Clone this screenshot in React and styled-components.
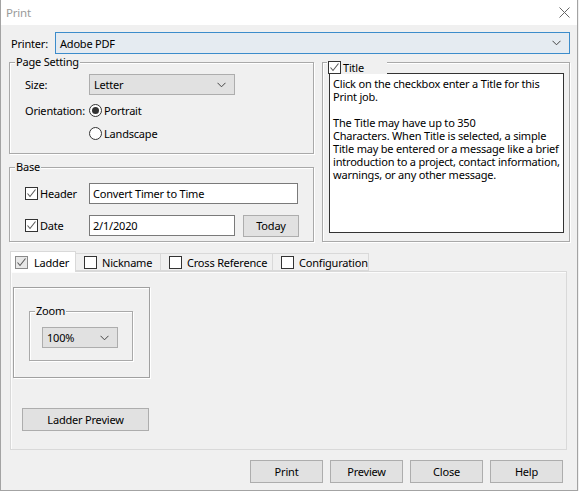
import * as React from 'react'
import styled, {createGlobalStyle} from 'styled-components'

const GlobalStyle = createGlobalStyle`
  html, body {
    margin: 0;
    padding: 0;
    background: #f0f0f0;
  }
  body {
    font-family: "Noto Sans", "Liberation Sans", sans-serif;
    font-size: 11px;
    letter-spacing: -0.2px;
    color: #000;
  }
  * { box-sizing: border-box; }
`

function Check({checked = true, dim}) {
  return (
    <StyledCheck dim={dim ? 1 : 0}>
      {checked && (
        <svg width="11" height="11" viewBox="0 0 11 11">
          <polyline points="1.5,5.5 4,8.5 9.5,1.5" fill="none" stroke="#5a5a5a" strokeWidth="1.1" />
        </svg>
      )}
    </StyledCheck>
  )
}

function Radio({checked}) {
  return <StyledRadio>{checked && <span />}</StyledRadio>
}

function Chevron() {
  return (
    <svg width="9" height="6" viewBox="0 0 9 6">
      <polyline points="0.5,0.8 4.5,4.8 8.5,0.8" fill="none" stroke="#444" strokeWidth="1" />
    </svg>
  )
}

function Select({value, width, height = 21, variant}) {
  return (
    <StyledSelect style={{width}} h={height} variant={variant}>
      <span>{value}</span>
      <Chevron />
    </StyledSelect>
  )
}

const TITLE_TEXT = [
  'Click on the checkbox enter a Title for this',
  'Print job.',
  '',
  'The Title may have up to 350',
  'Characters. When Title is selected, a simple',
  'Title may be entered or a message like a brief',
  'introduction to a project, contact information,',
  'warnings, or any other message.'
].join('\n')

const tabs = [
  {name: 'Ladder', width: 66, checked: true, active: true},
  {name: 'Nickname', width: 85},
  {name: 'Cross Reference', width: 112},
  {name: 'Configuration', width: 96}
]

export default function App() {
  return (
    <>
      <GlobalStyle />
      <Window>
        <TitleBar>
          <span className="caption">Print</span>
          <svg width="11" height="11" viewBox="0 0 11 11">
            <path d="M0.5 0.5 L10.5 10.5 M10.5 0.5 L0.5 10.5" stroke="#666" strokeWidth="1" />
          </svg>
        </TitleBar>

        <Body>
          <PrinterRow>
            <label>Printer:</label>
            <Select value="Adobe PDF" height={22} variant="focus" />
          </PrinterRow>

          <Columns>
            <LeftColumn>
              <GroupBox h={92}>
                <Legend>Page Setting</Legend>
                <PageGrid>
                  <FieldLabel>Size:</FieldLabel>
                  <Select value="Letter" width={146} />
                  <FieldLabel>Orientation:</FieldLabel>
                  <RadioRow><Radio checked />Portrait</RadioRow>
                  <span />
                  <RadioRow><Radio />Landscape</RadioRow>
                </PageGrid>
              </GroupBox>

              <GroupBox h={75}>
                <Legend>Base</Legend>
                <BaseRows>
                  <BaseRow>
                    <CheckLabel><Check />Header</CheckLabel>
                    <TextInput w={209}>Convert Timer to Time</TextInput>
                  </BaseRow>
                  <BaseRow>
                    <CheckLabel><Check />Date</CheckLabel>
                    <TextInput w={146}>2/1/2020</TextInput>
                    <Button w={56} h={22}>Today</Button>
                  </BaseRow>
                </BaseRows>
              </GroupBox>
            </LeftColumn>

            <GroupBox>
              <Legend className="with-check"><Check />Title</Legend>
              <TitleArea>{TITLE_TEXT}</TitleArea>
            </GroupBox>
          </Columns>

          <TabStrip>
            {tabs.map(tab => (
              <Tab key={tab.name} w={tab.width} active={tab.active ? 1 : 0}>
                <Check checked={!!tab.checked} dim={tab.active} />
                <span>{tab.name}</span>
              </Tab>
            ))}
          </TabStrip>
          <TabPanel>
            <PlainGroup>
              <GroupBox className="zoom">
                <Legend>Zoom</Legend>
                <Select value="100%" width={76} />
              </GroupBox>
            </PlainGroup>
            <Button w={127} h={23} className="preview">Ladder Preview</Button>
          </TabPanel>

          <ButtonBar>
            <Button w={73} h={23}>Print</Button>
            <Button w={73} h={23}>Preview</Button>
            <Button w={73} h={23}>Close</Button>
            <Button w={73} h={23}>Help</Button>
          </ButtonBar>
        </Body>
      </Window>
    </>
  )
}

const Window = styled.div`
  width: 578px;
  height: 491px;
  border: 1px solid #a3a3a3;
  border-top: none;
  background: #f0f0f0;
  display: flex;
  flex-direction: column;
`

const TitleBar = styled.div`
  height: 25px;
  background: #fff;
  display: flex;
  align-items: center;
  justify-content: space-between;
  padding: 0 7px 0 5px;

  .caption {
    color: #9a9a9a;
    font-size: 11.5px;
  }
`

const Body = styled.div`
  flex: 1;
  padding: 7px 7px 0 8px;
  display: flex;
  flex-direction: column;
`

const PrinterRow = styled.div`
  display: flex;
  align-items: center;
  height: 22px;

  label {
    width: 46px;
    padding-left: 2px;
  }
  & > div {
    flex: 1;
  }
`

const StyledSelect = styled.div`
  height: ${p => p.h}px;
  display: flex;
  align-items: center;
  justify-content: space-between;
  padding: 0 8px 0 4px;
  background: ${p => p.variant === 'focus' ? '#e5ebf1' : '#e1e1e1'};
  border: 1px solid ${p => p.variant === 'focus' ? '#3c8ccb' : '#adadad'};
  white-space: nowrap;
`

const Columns = styled.div`
  margin-top: 8px;
  display: grid;
  grid-template-columns: 305px 248px;
  column-gap: 8px;
`

const LeftColumn = styled.div`
  display: flex;
  flex-direction: column;
  gap: 13px;
`

const GroupBox = styled.div`
  position: relative;
  height: ${p => p.h ? `${p.h}px` : 'auto'};
  border: 1px solid #a9a9a9;
  box-shadow: inset 1px 1px 0 #fff, 1px 1px 0 #fff;

  &.zoom {
    width: 104px;
    height: 50px;
    padding: 15px 0 0 12px;
  }
`

const Legend = styled.span`
  position: absolute;
  top: -9px;
  left: 5px;
  padding: 0 1px;
  line-height: 16px;
  background: #f0f0f0;
  display: flex;
  align-items: center;
  gap: 2px;

  &.with-check {
    top: -2px;
    left: 4px;
    width: 60px;
    height: 13px;
  }
`

const PageGrid = styled.div`
  display: grid;
  grid-template-columns: 64px 146px;
  grid-template-rows: 21px 30px 16px;
  align-items: center;
  padding: 11px 0 0 15px;
`

const FieldLabel = styled.span`
  white-space: nowrap;
`

const RadioRow = styled.div`
  display: flex;
  align-items: center;
  gap: 2px;
  white-space: nowrap;
`

const StyledRadio = styled.span`
  width: 13px;
  height: 13px;
  border-radius: 50%;
  border: 1px solid #333;
  background: #fff;
  display: flex;
  align-items: center;
  justify-content: center;

  span {
    width: 7px;
    height: 7px;
    border-radius: 50%;
    background: #333;
  }
`

const StyledCheck = styled.span`
  flex: none;
  width: 13px;
  height: 13px;
  border: 1px solid ${p => p.dim ? '#8a8a8a' : '#333'};
  background: ${p => p.dim ? '#e8e8e8' : '#fff'};
  display: flex;
  align-items: center;
  justify-content: center;
`

const BaseRows = styled.div`
  display: flex;
  flex-direction: column;
  gap: 11px;
  padding: 15px 0 0 15px;
`

const BaseRow = styled.div`
  display: flex;
  align-items: center;
  height: 21px;
  gap: 8px;
`

const CheckLabel = styled.label`
  width: 56px;
  display: flex;
  align-items: center;
  gap: 2px;
`

const TextInput = styled.div`
  width: ${p => p.w}px;
  height: 21px;
  background: #fff;
  border: 1px solid #7a7a7a;
  padding: 0 3px;
  display: flex;
  align-items: center;
  white-space: nowrap;
`

const Button = styled.button`
  width: ${p => p.w}px;
  height: ${p => p.h}px;
  background: #e1e1e1;
  border: 1px solid #adadad;
  font-family: inherit;
  font-size: 11px;
  letter-spacing: -0.2px;
  color: #000;
  padding: 0;

  &.preview {
    margin: 30px 0 0 9px;
  }
`

const TitleArea = styled.div`
  margin: 10px 5px 7px 6px;
  height: 160px;
  background: #fff;
  border: 1px solid #333;
  padding: 3px 3px;
  line-height: 13px;
  white-space: pre;
  overflow: hidden;
`

const TabStrip = styled.div`
  margin: 9px 0 0 1px;
  display: flex;
  align-items: flex-end;
  height: 20px;
  position: relative;
  z-index: 1;
`

const Tab = styled.div`
  width: ${p => p.w}px;
  height: ${p => p.active ? 21 : 18}px;
  margin-bottom: ${p => p.active ? -1 : 0}px;
  background: ${p => p.active ? '#fff' : '#f0f0f0'};
  border: 1px solid #d9d9d9;
  border-bottom: ${p => p.active ? 'none' : '1px solid #d9d9d9'};
  border-left-width: ${p => p.active ? 1 : 0}px;
  display: flex;
  align-items: center;
  gap: ${p => p.active ? 6 : 5}px;
  padding-left: ${p => p.active ? 4 : 8}px;
  white-space: nowrap;
`

const TabPanel = styled.div`
  margin: 0 3px 0 1px;
  height: 179px;
  border: 1px solid #d9d9d9;
  box-shadow: inset 1px 1px 0 #fcfcfc;
  background: #f0f0f0;
  padding: 15px 0 0 2px;
  display: flex;
  flex-direction: column;
  align-items: flex-start;
`

const PlainGroup = styled.div`
  width: 137px;
  height: 91px;
  border: 1px solid #a0a0a0;
  box-shadow: 1px 1px 0 #fff, inset 1px 1px 0 #fff;
  padding: 23px 0 0 15px;
`

const ButtonBar = styled.div`
  margin-top: 10px;
  display: flex;
  justify-content: flex-end;
  gap: 7px;
  padding-right: 7px;
`
